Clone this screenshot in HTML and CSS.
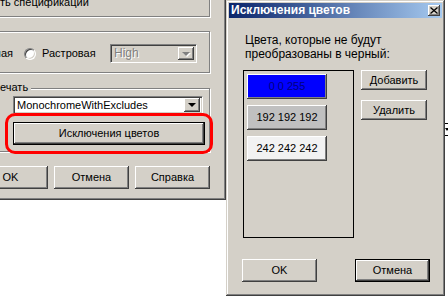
FILE: index.html
```html
<!DOCTYPE html>
<html lang="ru">
<head>
    <meta charset="UTF-8">
    <meta name="viewport" content="width=device-width, initial-scale=1.0">
    <title>Исключения цветов</title>
    <link rel="stylesheet" href="styles.css">
</head>
<body>
<div class="dlg dlg-print">
    <div class="etched spec"><span>ть спецификации</span></div>
    <div class="etched mode">
        <div class="mode-row">
            <span class="cut">ная</span>
            <span class="radio"></span>
            <span class="radio-lbl">Растровая</span>
            <div class="combo combo-off">
                <span class="combo-val">High</span>
                <span class="combo-btn"><i class="arrow"></i></span>
            </div>
        </div>
    </div>
    <div class="etched printing">
        <span class="legend">ечать</span>
        <div class="combo combo-mode">
            <span class="combo-val">MonochromeWithExcludes</span>
            <span class="combo-btn"><i class="arrow"></i></span>
        </div>
        <button class="btn btn-default btn-wide">Исключения цветов</button>
    </div>
    <div class="mark"></div>
    <div class="dlg-buttons">
        <button class="btn">OK</button>
        <button class="btn">Отмена</button>
        <button class="btn">Справка</button>
    </div>
</div>

<div class="dlg dlg-excl">
    <div class="caption">
        <span>Исключения цветов</span>
        <span class="close">
            <svg width="8" height="7" viewBox="0 0 8 7"><path d="M0.5 0.5L7.5 6.5M7.5 0.5L0.5 6.5" stroke="#000" stroke-width="1.3"/></svg>
        </span>
    </div>
    <p class="hint">Цвета, которые не будут<br>преобразованы в черный:</p>
    <div class="excl-row">
        <div class="swatch-list">
            <div class="swatch sw-blue">0 0 255</div>
            <div class="swatch sw-gray">192 192 192</div>
            <div class="swatch sw-light">242 242 242</div>
        </div>
        <div class="side-btns">
            <button class="btn btn-side">Добавить</button>
            <button class="btn btn-side">Удалить</button>
        </div>
    </div>
    <div class="excl-buttons">
        <button class="btn">OK</button>
        <button class="btn btn-default">Отмена</button>
    </div>
</div>

<!-- кусок окна за диалогом -->
<div class="peek">
    <div class="peek-line"></div>
    <i class="arrow"></i>
    <div class="peek-line"></div>
</div>
</body>
</html>
```

FILE: styles.css
```css
* { box-sizing: border-box; }
body { margin: 0; width: 448px; height: 296px; overflow: hidden; position: relative; background: #fff; color: #000; font: 11px/13px "Liberation Sans", Arial, sans-serif; }

.dlg { position: absolute; background: #d4d0c8; }
.dlg-print { left: -3px; top: -3px; width: 229px; height: 203px; padding: 3px; box-shadow: inset -1px -1px #404040, inset -2px -2px #808080; }

.etched { border: 1px solid #808080; box-shadow: inset 1px 1px #fff, 1px 1px #fff; margin-left: -10px; width: 220px; }
.spec { margin-top: -20px; height: 37px; padding: 15px 0 0 9px; white-space: nowrap; }
.mode { margin-top: 14px; height: 42px; padding: 12px 0 0 9px; }
.mode-row { display: flex; align-items: center; height: 19px; }
.cut { width: 13px; display: flex; justify-content: flex-end; white-space: nowrap; }
.radio { width: 12px; height: 12px; margin-left: 11px; border-radius: 50%; background: #fff; border: 1px solid; border-color: #808080 #fff #fff #808080; box-shadow: inset 1px 1px #404040, inset -1px -1px #d4d0c8; }
.radio-lbl { margin-left: 6px; width: 68px; }

.combo { display: flex; align-items: stretch; border: 1px solid; border-color: #808080 #fff #fff #808080; box-shadow: inset 1px 1px #404040, inset -1px -1px #d4d0c8; padding: 2px; background: #fff; }
.combo-val { flex: 1; padding-left: 1px; display: flex; align-items: center; white-space: nowrap; overflow: hidden; }
.combo-btn { width: 16px; display: flex; align-items: center; justify-content: center; background: #d4d0c8; box-shadow: inset -1px -1px #404040, inset 1px 1px #fff, inset -2px -2px #808080; }
.arrow { display: block; width: 0; height: 0; border-left: 4px solid transparent; border-right: 4px solid transparent; border-top: 4px solid #000; }
.combo-off { width: 87px; height: 19px; background: #d4d0c8; }
.combo-off .combo-val { color: #808080; text-shadow: 1px 1px #fff; font-size: 12px; }
.combo-off .arrow { border-top-color: #808080; filter: drop-shadow(1px 1px 0 #fff); }
.combo-mode { margin-left: 13px; margin-top: 2px; width: 190px; height: 18px; }
.combo-mode .combo-btn { margin: -1px 0; }

.printing { margin-top: 15px; height: 64px; padding-left: 9px; display: flex; flex-direction: column; align-items: flex-start; }
.legend { margin-top: -8px; padding-right: 3px; background: #d4d0c8; }

.btn { font: inherit; color: #000; background: #d4d0c8; border: 0; padding: 0; width: 75px; height: 23px; box-shadow: inset -1px -1px #404040, inset 1px 1px #fff, inset -2px -2px #808080; }
.btn-default { border: 1px solid #000; }
.btn-wide { margin-left: 13px; margin-top: 8px; width: 192px; }

.mark { position: absolute; left: 8px; top: 116px; width: 208px; height: 41px; border: 3px solid #f00; border-radius: 10px; }
.dlg-buttons { display: flex; gap: 6px; margin: 14px 0 0 -27px; }

.dlg-excl { left: 226px; top: 0; width: 219px; height: 296px; padding: 3px; box-shadow: inset -1px -1px #404040, inset 1px 1px #d4d0c8, inset -2px -2px #808080, inset 2px 2px #fff; }
.caption { height: 15px; display: flex; align-items: center; justify-content: space-between; padding: 0 2px; background: linear-gradient(to right, #0a246a, #a6caf0); color: #fff; font-weight: bold; font-size: 12px; }
.close { width: 12px; height: 11px; display: flex; align-items: center; justify-content: center; background: #d4d0c8; box-shadow: inset -1px -1px #404040, inset 1px 1px #fff, inset -2px -2px #808080; }
.close svg { display: block; }
.hint { margin: 15px 0 0 16px; font-size: 12px; line-height: 14px; }
.excl-row { display: flex; align-items: flex-start; margin: 9px 0 0 14px; }
.swatch-list { width: 111px; height: 168px; border: 1px solid #000; padding: 3px; display: flex; flex-direction: column; gap: 6px; }
.swatch { width: 80px; height: 25px; display: flex; align-items: center; justify-content: center; box-shadow: inset -1px -1px #404040, inset 1px 1px #fff, inset -2px -2px #808080; }
.sw-blue { background: #0000ff; color: #000080; }
.sw-gray { background: #c0c0c0; }
.sw-light { background: #f2f2f2; }
.side-btns { display: flex; flex-direction: column; gap: 10px; margin-left: 7px; }
.btn-side { width: 66px; height: 20px; }
.excl-buttons { display: flex; gap: 38px; margin: 21px 0 0 13px; }

.peek { position: absolute; left: 445px; top: 123px; width: 3px; display: flex; flex-direction: column; gap: 4px; }
.peek-line { height: 1px; background: #000; }
.peek .arrow { border-left-width: 2px; border-right-width: 2px; border-top-width: 3px; }
```
